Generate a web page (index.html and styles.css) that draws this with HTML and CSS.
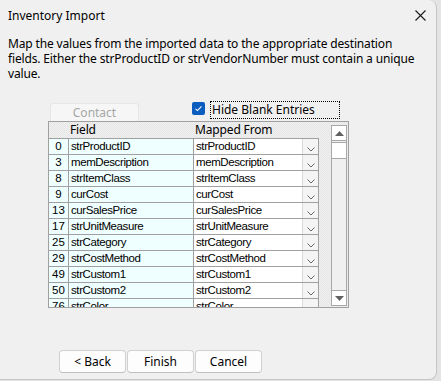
FILE: index.html
```html
<!DOCTYPE html>
<html lang="en">
<head>
    <meta charset="UTF-8">
    <meta name="viewport" content="width=device-width, initial-scale=1.0">
    <title>Inventory Import</title>
    <link rel="stylesheet" href="styles.css">
</head>
<body>
    <div class="dialog">
        <div class="titlebar">
            <span class="title">Inventory Import</span>
            <button class="close" title="Close">
                <svg width="11" height="11" viewBox="0 0 11 11"><path d="M0.5 0.5 L10.5 10.5 M10.5 0.5 L0.5 10.5" stroke="#1a1a1a" stroke-width="1.1" fill="none"/></svg>
            </button>
        </div>

        <p class="intro">Map the values from the imported data to the appropriate destination fields. Either the strProductID or strVendorNumber must contain a unique value.</p>

        <div class="options">
            <button class="contact" disabled>Contact</button>
            <label class="hide-blank">
                <span class="check">
                    <svg width="13" height="13" viewBox="0 0 13 13"><path d="M3.5 6.8 L5.5 8.6 L9.5 4.4" stroke="#fff" stroke-width="1.1" fill="none"/></svg>
                </span>
                <span class="focus">Hide Blank Entries</span>
            </label>
        </div>

        <div class="grid">
            <div class="grid-body">
                <div class="grid-head">
                    <span class="h-idx"></span>
                    <span class="h-field">Field</span>
                    <span class="h-map">Mapped From</span>
                </div>
                <div id="rows"></div>
            </div>
            <div class="scrollbar">
                <div class="sb-btn up">
                    <svg width="9" height="5" viewBox="0 0 9 5"><path d="M4.5 0 L9 5 L0 5 Z" fill="#606060"/></svg>
                </div>
                <div class="sb-thumb"></div>
                <div class="sb-track"></div>
                <div class="sb-btn down">
                    <svg width="9" height="5" viewBox="0 0 9 5"><path d="M0 0 L9 0 L4.5 5 Z" fill="#606060"/></svg>
                </div>
            </div>
        </div>

        <div class="actions">
            <button class="btn">&lt; Back</button>
            <button class="btn">Finish</button>
            <button class="btn">Cancel</button>
        </div>
    </div>

    <script>
        const mappings = [
            [0, 'strProductID'],
            [3, 'memDescription'],
            [8, 'strItemClass'],
            [9, 'curCost'],
            [13, 'curSalesPrice'],
            [17, 'strUnitMeasure'],
            [25, 'strCategory'],
            [29, 'strCostMethod'],
            [49, 'strCustom1'],
            [50, 'strCustom2'],
            [76, 'strColor']
        ];

        const chevron = '<svg width="8" height="5" viewBox="0 0 8 5"><path d="M0.5 0.5 L4 4 L7.5 0.5" stroke="#6a6a6a" stroke-width="1" fill="none"/></svg>';

        const rowsEl = document.getElementById('rows');
        mappings.forEach(([num, name]) => {
            const row = document.createElement('div');
            row.className = 'row';
            row.innerHTML = `
                <span class="idx">${num}</span>
                <span class="field">${name}</span>
                <span class="map"><span class="map-text">${name}</span><span class="drop">${chevron}</span></span>`;
            rowsEl.appendChild(row);
        });
    </script>
</body>
</html>
```

FILE: styles.css
```css
* {
    margin: 0;
    padding: 0;
    box-sizing: border-box;
}

body {
    font-family: 'Noto Sans', 'Open Sans', sans-serif;
    font-size: 12px;
    color: #000;
    background: #e4e4e4;
    overflow: hidden;
}

.dialog {
    width: 437px;
    height: 380px;
    background: #f0f0f0;
    border-right: 1px solid #c4c4c4;
    border-bottom: 1px solid #c4c4c4;
    border-radius: 0 8px 8px 0;
    overflow: hidden;
}

.titlebar {
    height: 30px;
    display: flex;
    align-items: center;
    justify-content: space-between;
    padding: 0 10px 0 8px;
}

.close {
    border: none;
    background: none;
    width: 11px;
    height: 11px;
    display: flex;
}

.intro {
    padding: 6px 8px 0 8px;
    line-height: 15px;
    width: 428px;
    letter-spacing: -0.15px;
}

.options {
    display: flex;
    height: 20px;
    margin-top: 20px;
}

.contact {
    margin-left: 50px;
    margin-top: 2px;
    width: 89px;
    height: 18px;
    font-family: inherit;
    font-size: 12px;
    color: #a6a6a6;
    background: #f6f6f6;
    border: 1px solid #e6e6e6;
    border-bottom: none;
    border-radius: 3px 3px 0 0;
}

.hide-blank {
    margin-left: 53px;
    display: flex;
    align-items: flex-start;
    height: 18px;
}

.check {
    width: 13px;
    height: 13px;
    margin-top: 1px;
    margin-right: 5px;
    background: #0b5cbf;
    border-radius: 2px;
    display: flex;
}

.focus {
    width: 130px;
    height: 18px;
    border: 1px dotted #000;
    padding-left: 1px;
    line-height: 16px;
}

.grid {
    margin-left: 48px;
    width: 301px;
    height: 187px;
    border: 1px solid #a0a0a0;
    display: flex;
    overflow: hidden;
    background: repeating-conic-gradient(#e5e5e5 0 25%, #f1f1f1 0 50%) 0 0 / 2px 2px;
}

.grid-body {
    width: 270px;
    flex-shrink: 0;
    font-family: 'Liberation Sans', Arial, sans-serif;
    font-size: 11.5px;
    letter-spacing: -0.4px;
}

.grid-head {
    height: 16px;
    display: flex;
    line-height: 16px;
    font-family: 'Noto Sans', 'Open Sans', sans-serif;
    font-size: 12px;
    letter-spacing: -0.15px;
}

.h-idx {
    width: 20px;
}

.h-field {
    width: 125px;
    padding-left: 1px;
}

.h-map {
    width: 125px;
    padding-left: 1px;
}

.row {
    height: 16px;
    display: flex;
    border-top: 1px solid #a0a0a0;
    line-height: 15px;
}

.idx {
    width: 20px;
    text-align: center;
    background: #effefe;
    border-right: 1px solid #a0a0a0;
    letter-spacing: 0;
}

.field {
    width: 125px;
    padding-left: 2px;
    background: #effefe;
    border-right: 1px solid #a0a0a0;
}

.map {
    width: 125px;
    padding-left: 2px;
    background: #fff;
    border-right: 1px solid #a0a0a0;
    display: flex;
    justify-content: space-between;
}

.drop {
    width: 16px;
    height: 15px;
    background: #f4f4f4;
    border-left: 1px solid #dadada;
    display: flex;
    justify-content: center;
    padding-top: 8px;
}

.scrollbar {
    width: 16px;
    height: 181px;
    margin: 3px 1px 0 12px;
    border: 1px solid #a8a8a8;
    background: #f0f0f0;
    display: flex;
    flex-direction: column;
}

.sb-btn {
    height: 15px;
    background: #fff;
    display: flex;
    align-items: center;
    justify-content: center;
}

.sb-btn.up {
    border-bottom: 1px solid #a8a8a8;
}

.sb-btn.down {
    border-top: 1px solid #a8a8a8;
}

.sb-thumb {
    height: 17px;
    margin-top: 1px;
    background: #fff;
    border-top: 1px solid #a8a8a8;
    border-bottom: 1px solid #a8a8a8;
}

.sb-track {
    flex: 1;
}

.actions {
    display: flex;
    gap: 1px;
    margin: 42px 0 0 59px;
}

.btn {
    width: 67px;
    height: 23px;
    font-family: inherit;
    font-size: 12px;
    color: #000;
    background: #fdfdfd;
    border: 1px solid #d0d0d0;
    border-bottom-color: #c0c0c0;
    border-radius: 4px;
}
```
